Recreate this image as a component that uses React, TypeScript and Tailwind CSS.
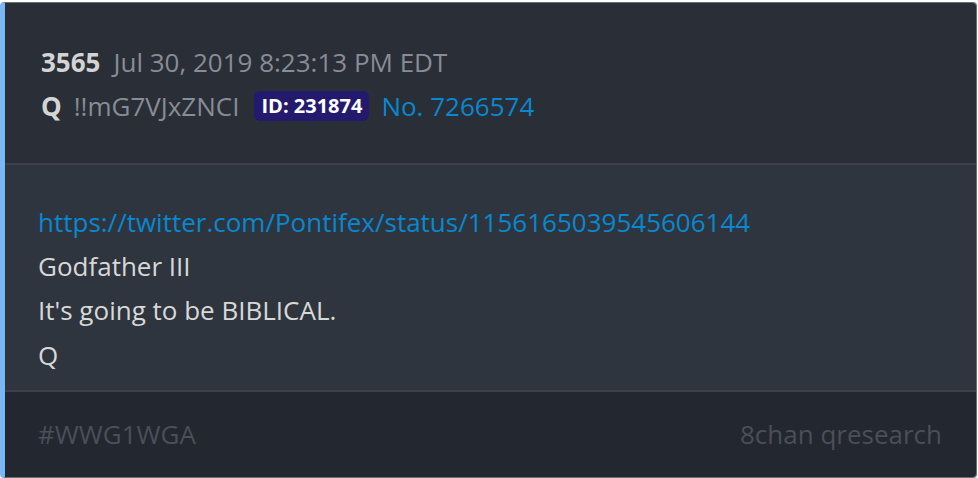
export default function App() {
  return (
    <div className="w-[978px] h-[478px] bg-[#ffffff] p-0" style={{ fontFamily: '"Open Sans", "Noto Sans", sans-serif' }}>
      <div className="w-[977px] h-[476px] mt-[2px] flex flex-col overflow-hidden rounded-[4px] border border-[#6b6f78] border-l-[5px] border-l-[#7ab8f5]">
        {/* Header */}
        <div className="h-[160px] bg-[#2a2e37] pl-[36px] pt-[37px] flex flex-col">
          <div className="flex items-center text-[26px] leading-[44px]">
            <span className="font-bold text-[#d4d4d4]">3565</span>
            <span className="ml-[13px] text-[#878c96]">Jul 30, 2019 8:23:13 PM EDT</span>
          </div>
          <div className="flex items-center text-[26px] leading-[44px]">
            <span className="font-bold text-[#d4d4d4]">Q</span>
            <span className="ml-[12px] text-[#878c96]">!!mG7VJxZNCI</span>
            <span className="ml-[15px] rounded-[6px] bg-[#231a6e] px-[7px] text-[20px] leading-[30px] font-bold text-white">ID: 231874</span>
            <span className="ml-[12px] text-[#0888cf]">No. 7266574</span>
          </div>
        </div>
        <div className="h-[2px] bg-[#3c414b]" />
        {/* Body */}
        <div className="h-[225px] bg-[#2f353f] pl-[33px] pt-[35px] text-[26px] leading-[44.2px] text-[#d8d8d8]">
          <div className="text-[#0888cf]">https://twitter.com/Pontifex/status/1156165039545606144</div>
          <div>Godfather III</div>
          <div>It's going to be BIBLICAL.</div>
          <div>Q</div>
        </div>
        <div className="h-[2px] bg-[#3c414b]" />
        {/* Footer */}
        <div className="flex-1 bg-[#23272f] pl-[33px] pr-[34px] flex items-center justify-between text-[26px] text-[#4a4f59]">
          <span>#WWG1WGA</span>
          <span>8chan qresearch</span>
        </div>
      </div>
    </div>
  );
}
